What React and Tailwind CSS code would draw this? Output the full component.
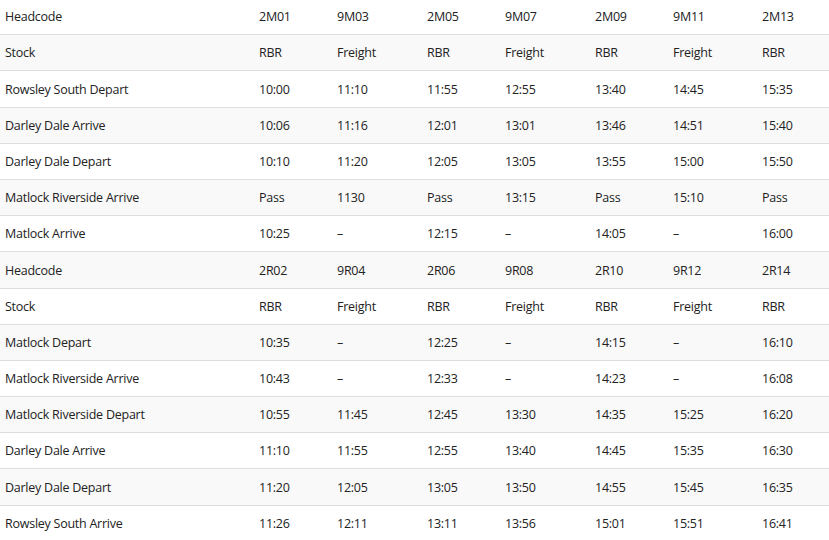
import React from 'react';

const rows = [
  ['Headcode', '2M01', '9M03', '2M05', '9M07', '2M09', '9M11', '2M13'],
  ['Stock', 'RBR', 'Freight', 'RBR', 'Freight', 'RBR', 'Freight', 'RBR'],
  ['Rowsley South Depart', '10:00', '11:10', '11:55', '12:55', '13:40', '14:45', '15:35'],
  ['Darley Dale Arrive', '10:06', '11:16', '12:01', '13:01', '13:46', '14:51', '15:40'],
  ['Darley Dale Depart', '10:10', '11:20', '12:05', '13:05', '13:55', '15:00', '15:50'],
  ['Matlock Riverside Arrive', 'Pass', '1130', 'Pass', '13:15', 'Pass', '15:10', 'Pass'],
  ['Matlock Arrive', '10:25', '–', '12:15', '–', '14:05', '–', '16:00'],
  ['Headcode', '2R02', '9R04', '2R06', '9R08', '2R10', '9R12', '2R14'],
  ['Stock', 'RBR', 'Freight', 'RBR', 'Freight', 'RBR', 'Freight', 'RBR'],
  ['Matlock Depart', '10:35', '–', '12:25', '–', '14:15', '–', '16:10'],
  ['Matlock Riverside Arrive', '10:43', '–', '12:33', '–', '14:23', '–', '16:08'],
  ['Matlock Riverside Depart', '10:55', '11:45', '12:45', '13:30', '14:35', '15:25', '16:20'],
  ['Darley Dale Arrive', '11:10', '11:55', '12:55', '13:40', '14:45', '15:35', '16:30'],
  ['Darley Dale Depart', '11:20', '12:05', '13:05', '13:50', '14:55', '15:45', '16:35'],
  ['Rowsley South Arrive', '11:26', '12:11', '13:11', '13:56', '15:01', '15:51', '16:41'],
];

const App = () => {
  return (
    <div
      className="w-[829px] h-[540px] overflow-hidden bg-white text-[#222] text-[12.5px] tracking-[-0.25px]"
      style={{ fontFamily: '"Open Sans", "Noto Sans", sans-serif' }}
    >
      <div className="-mt-[1px]">
        {rows.map((r, i) => (
          <div
            key={i}
            className={`grid grid-cols-[254px_78px_90px_78px_90px_78px_89px_1fr] h-[36.2px] items-center border-b border-[#dddddd] ${
              i % 2 === 1 ? 'bg-[#f9f9f9]' : 'bg-white'
            }`}
          >
            {r.map((c, j) => (
              <div key={j} className="pl-[5px] pt-[2px] whitespace-nowrap">
                {c}
              </div>
            ))}
          </div>
        ))}
      </div>
    </div>
  );
};

export default App;
